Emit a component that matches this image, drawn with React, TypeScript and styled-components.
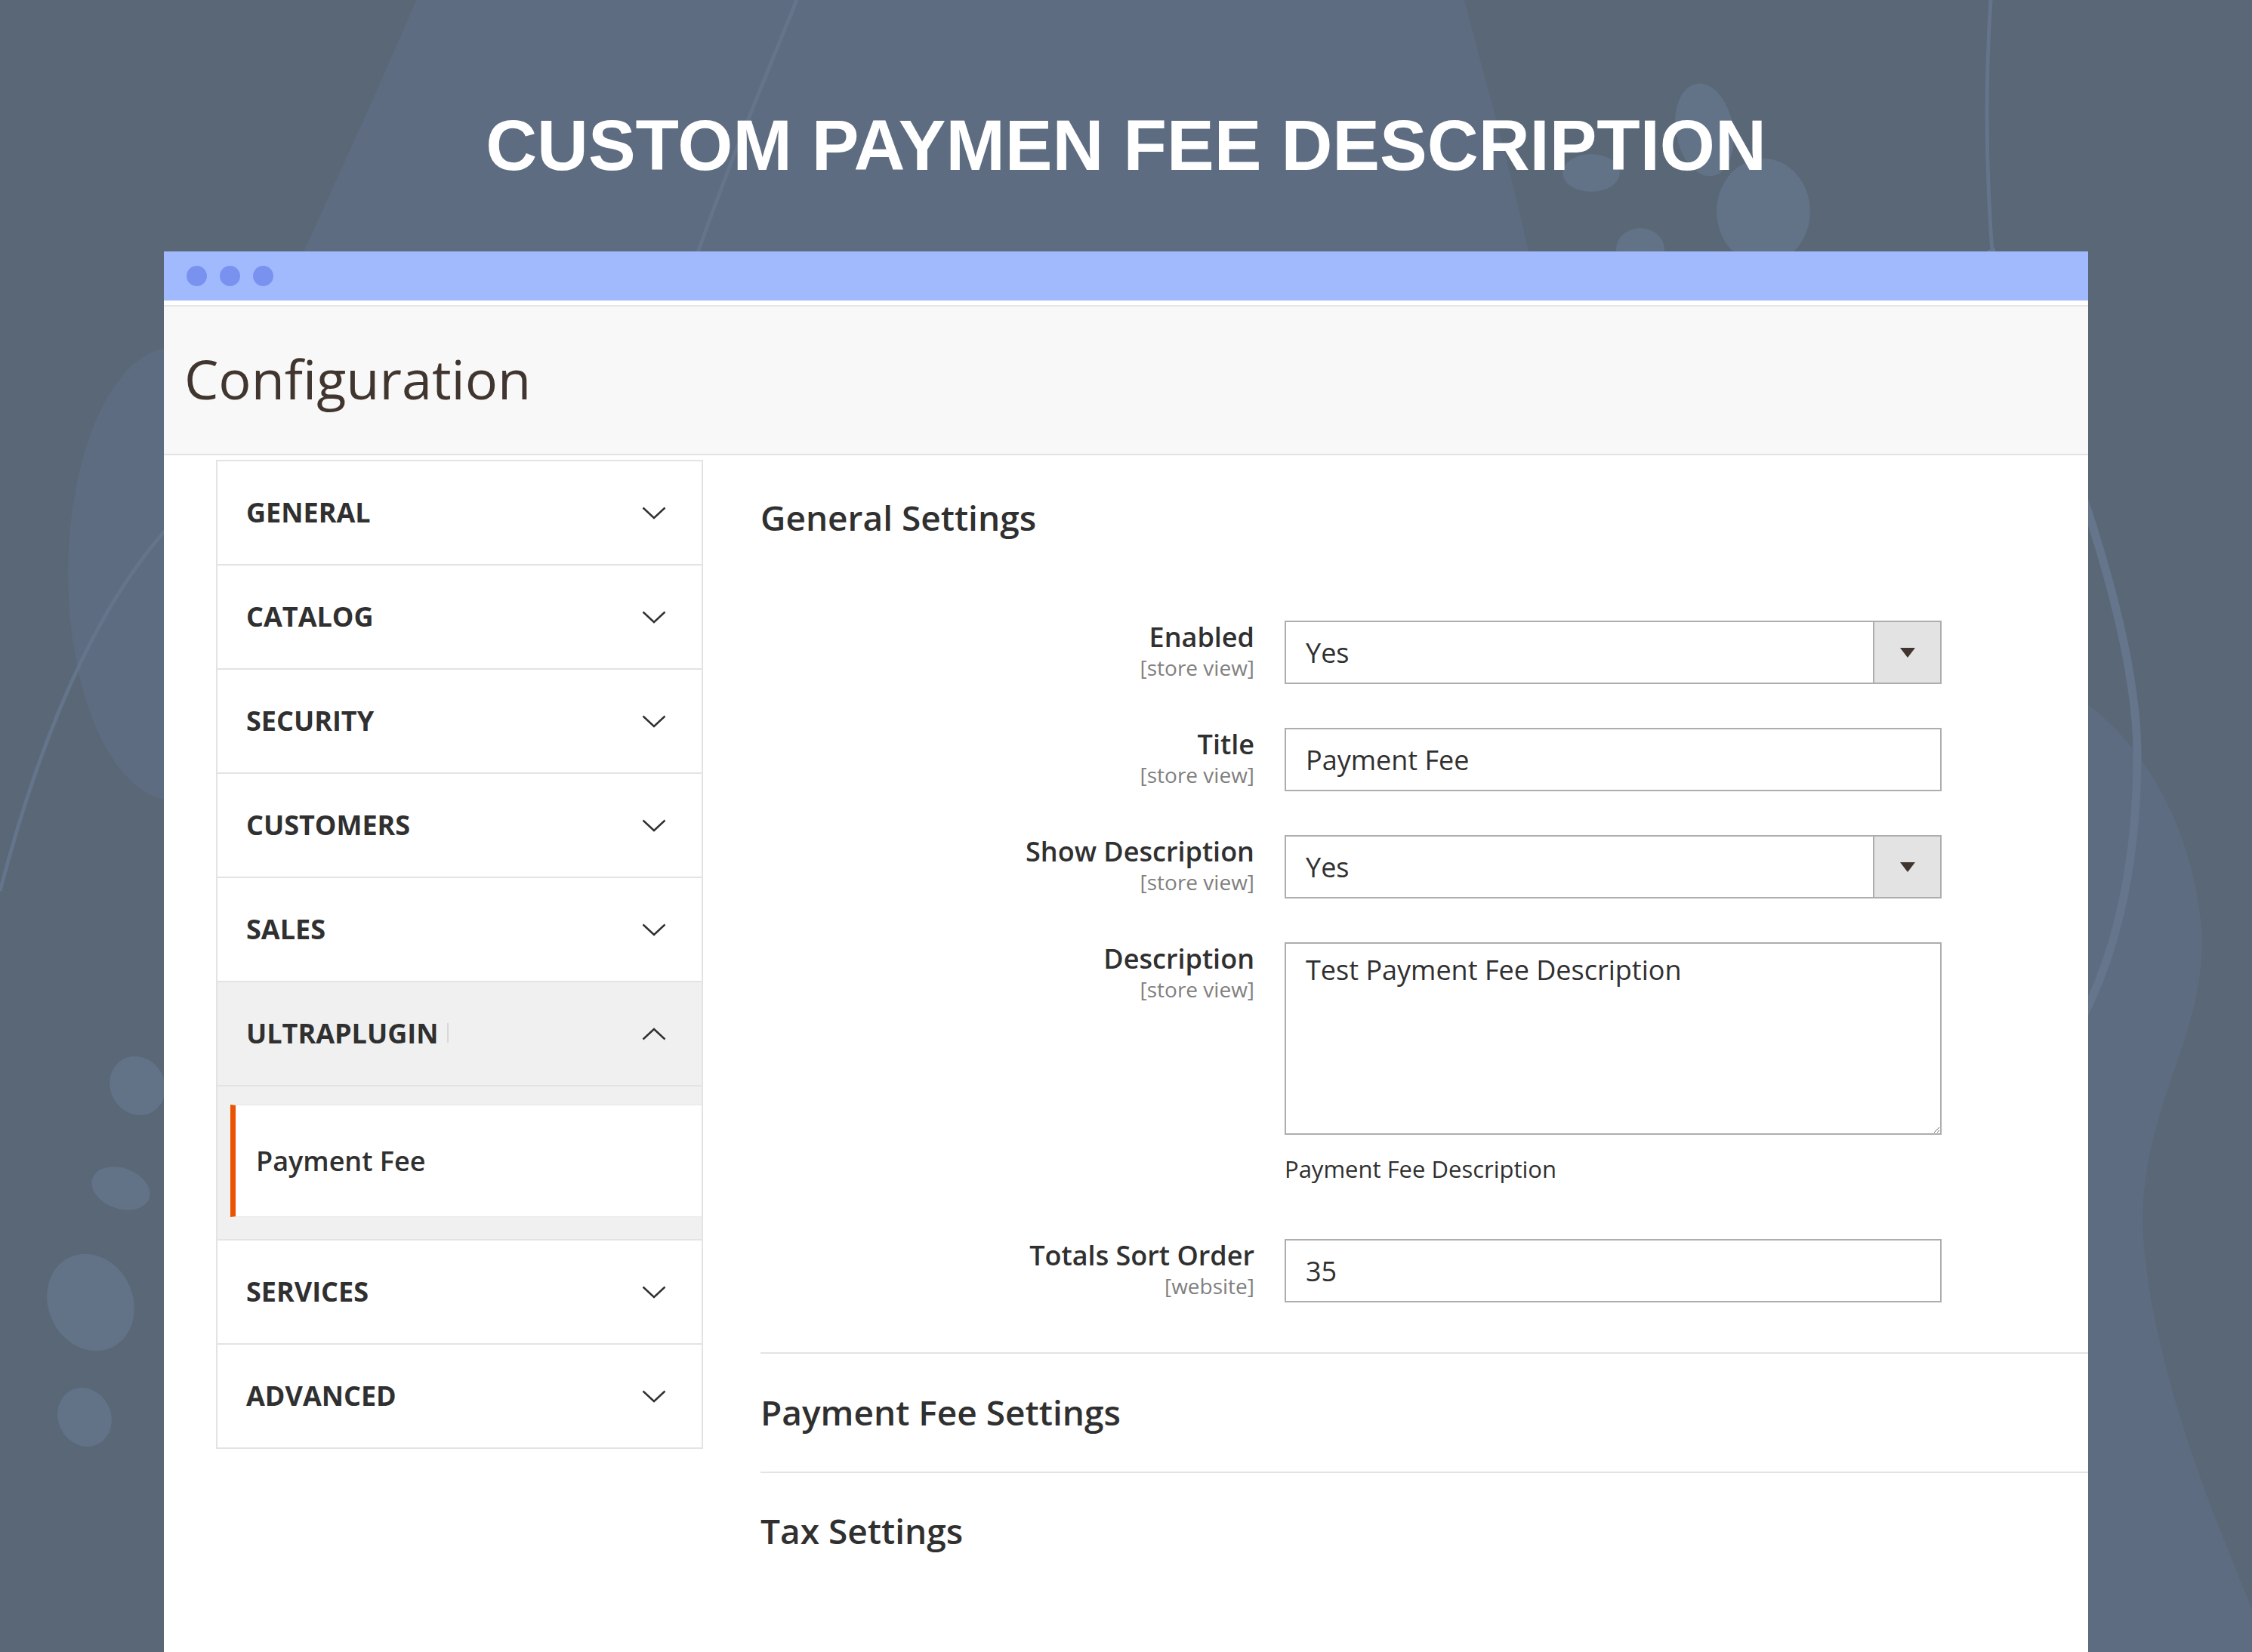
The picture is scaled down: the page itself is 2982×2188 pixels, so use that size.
import styled, { createGlobalStyle } from "styled-components";

const GlobalStyle = createGlobalStyle`
  html, body {
    margin: 0;
    padding: 0;
  }
  body {
    background: #596777;
    font-family: "Open Sans", "Liberation Sans", sans-serif;
    overflow: hidden;
  }
`;

type NavEntry = { label: string; open?: boolean; children?: string[] };

const nav: NavEntry[] = [
  { label: "GENERAL" },
  { label: "CATALOG" },
  { label: "SECURITY" },
  { label: "CUSTOMERS" },
  { label: "SALES" },
  { label: "ULTRAPLUGIN", open: true, children: ["Payment Fee"] },
  { label: "SERVICES" },
  { label: "ADVANCED" },
];

const Chevron = ({ up }: { up?: boolean }) => (
  <svg width="32" height="17" viewBox="0 0 32 17">
    <polyline
      points={up ? "1.5,15.5 16,2 30.5,15.5" : "1.5,1.5 16,15 30.5,1.5"}
      fill="none"
      stroke="#303030"
      strokeWidth="2.4"
    />
  </svg>
);

const DropArrow = () => (
  <svg width="20" height="13" viewBox="0 0 20 13">
    <polygon points="0,0 20,0 10,13" fill="#41362f" />
  </svg>
);

const Backdrop = () => (
  <BackdropSvg width="2982" height="2188" viewBox="0 0 2982 2188">
    <path d="M551,0 C500,120 440,250 390,360 L2030,360 C2000,220 1965,100 1939,0 Z" fill="#5d6c80" />
    <path d="M1055,0 C1010,110 960,230 915,360" stroke="#64748a" strokeWidth="5" fill="none" />
    <path d="M2636,0 C2628,120 2630,240 2640,360" stroke="#64748a" strokeWidth="5" fill="none" />
    <ellipse cx="2257" cy="172" rx="38" ry="62" transform="rotate(-10 2257 172)" fill="#627287" />
    <ellipse cx="2107" cy="229" rx="38" ry="25" fill="#627287" />
    <ellipse cx="2335" cy="280" rx="62" ry="70" fill="#627287" />
    <ellipse cx="2172" cy="330" rx="32" ry="28" fill="#627287" />
    <ellipse cx="230" cy="760" rx="140" ry="300" fill="#5d6c80" />
    <path d="M0,1180 C60,950 140,780 240,680" stroke="#64748a" strokeWidth="5" fill="none" />
    <path
      d="M2700,900 C2800,930 2900,1060 2915,1228 C2925,1380 2820,1480 2840,1661 C2860,1850 2950,2050 2982,2131 L2982,2188 L2700,2188 Z"
      fill="#5d6c80"
    />
    <path d="M2636,330 C2700,500 2830,800 2830,1000 C2830,1150 2800,1280 2740,1380" stroke="#65758b" strokeWidth="11" fill="none" />
    <ellipse cx="182" cy="1438" rx="36" ry="40" transform="rotate(-30 182 1438)" fill="#627287" />
    <ellipse cx="160" cy="1574" rx="40" ry="27" transform="rotate(20 160 1574)" fill="#627287" />
    <ellipse cx="120" cy="1725" rx="56" ry="66" transform="rotate(-25 120 1725)" fill="#627287" />
    <ellipse cx="112" cy="1877" rx="35" ry="40" transform="rotate(-25 112 1877)" fill="#627287" />
  </BackdropSvg>
);

const App = () => {
  return (
    <Page>
      <GlobalStyle />
      <Backdrop />
      <Headline>CUSTOM PAYMEN FEE DESCRIPTION</Headline>
      <Window>
        <TitleBar>
          <Dot />
          <Dot />
          <Dot />
        </TitleBar>
        <PageHeader>
          <PageTitle>Configuration</PageTitle>
        </PageHeader>
        <Body>
          <Sidebar>
            {nav.map((item) => (
              <div key={item.label}>
                <NavItem active={item.open}>
                  <NavLabel>
                    {item.label}
                    {item.open && <Caret />}
                  </NavLabel>
                  <Chevron up={item.open} />
                </NavItem>
                {item.children && (
                  <SubList>
                    {item.children.map((c) => (
                      <SubItem key={c}>{c}</SubItem>
                    ))}
                  </SubList>
                )}
              </div>
            ))}
          </Sidebar>
          <Main>
            <SectionTitle>General Settings</SectionTitle>
            <Form>
              <Row>
                <LabelBox>
                  <LabelText>Enabled</LabelText>
                  <Scope>[store view]</Scope>
                </LabelBox>
                <SelectField>
                  <FieldValue>Yes</FieldValue>
                  <SelectButton>
                    <DropArrow />
                  </SelectButton>
                </SelectField>
              </Row>
              <Row>
                <LabelBox>
                  <LabelText>Title</LabelText>
                  <Scope>[store view]</Scope>
                </LabelBox>
                <Field>Payment Fee</Field>
              </Row>
              <Row>
                <LabelBox>
                  <LabelText>Show Description</LabelText>
                  <Scope>[store view]</Scope>
                </LabelBox>
                <SelectField>
                  <FieldValue>Yes</FieldValue>
                  <SelectButton>
                    <DropArrow />
                  </SelectButton>
                </SelectField>
              </Row>
              <Row>
                <LabelBox>
                  <LabelText>Description</LabelText>
                  <Scope>[store view]</Scope>
                </LabelBox>
                <div>
                  <TextArea defaultValue="Test Payment Fee Description" readOnly />
                  <Hint>Payment Fee Description</Hint>
                </div>
              </Row>
              <Row>
                <LabelBox>
                  <LabelText>Totals Sort Order</LabelText>
                  <Scope>[website]</Scope>
                </LabelBox>
                <Field>35</Field>
              </Row>
            </Form>
            <Group first>
              <SectionTitle>Payment Fee Settings</SectionTitle>
            </Group>
            <Group>
              <SectionTitle>Tax Settings</SectionTitle>
            </Group>
          </Main>
        </Body>
      </Window>
    </Page>
  );
};

const Page = styled.div`
  position: relative;
  width: 2982px;
  height: 2188px;
  overflow: hidden;
  display: flex;
  flex-direction: column;
`;

const BackdropSvg = styled.svg`
  position: absolute;
  top: 0;
  left: 0;
  z-index: 0;
`;

const Headline = styled.h1`
  position: relative;
  z-index: 1;
  margin: 0;
  height: 333px;
  box-sizing: border-box;
  padding-top: 146px;
  font-family: "Liberation Sans", Arial, sans-serif;
  font-weight: 700;
  font-size: 94px;
  line-height: 93px;
  color: #ffffff;
  text-align: center;
`;

const Window = styled.div`
  position: relative;
  z-index: 1;
  margin-left: 217px;
  width: 2548px;
  flex: 1;
  background: #ffffff;
  display: flex;
  flex-direction: column;
`;

const TitleBar = styled.div`
  height: 65px;
  background: #a1bafd;
  display: flex;
  align-items: center;
  gap: 17px;
  padding-left: 30px;
  border-bottom: 6px solid #ffffff;
`;

const Dot = styled.span`
  width: 27px;
  height: 27px;
  border-radius: 50%;
  background: #7a92ef;
`;

const PageHeader = styled.div`
  height: 195px;
  background: #f8f8f8;
  border-top: 2px solid #e6e6e6;
  border-bottom: 2px solid #e3e3e3;
  display: flex;
  align-items: center;
  padding-left: 27px;
`;

const PageTitle = styled.h2`
  margin: 0 0 4px;
  font-size: 72px;
  font-weight: 400;
  color: #41362f;
  line-height: 1.2;
`;

const Body = styled.div`
  flex: 1;
  display: flex;
  align-items: flex-start;
`;

const Sidebar = styled.nav`
  margin: 6px 0 0 69px;
  width: 645px;
  box-sizing: border-box;
  border: 2px solid #e3e3e3;
  border-bottom: none;
`;

const NavItem = styled.div<{ active?: boolean }>`
  height: 138px;
  box-sizing: border-box;
  border-bottom: 2px solid #e3e3e3;
  display: flex;
  align-items: center;
  justify-content: space-between;
  padding: 0 47px 0 38px;
  background: ${(p) => (p.active ? "#f0f0f0" : "#ffffff")};
`;

const NavLabel = styled.span`
  display: flex;
  align-items: center;
  font-size: 36px;
  font-weight: 700;
  color: #303030;
  margin-top: -2px;
`;

const Caret = styled.span`
  width: 2px;
  height: 26px;
  margin-left: 12px;
  background: #d8d8d8;
`;

const SubList = styled.div`
  background: #f0f0f0;
  padding: 24px 0 29px 17px;
  border-bottom: 2px solid #e3e3e3;
`;

const SubItem = styled.div`
  height: 149px;
  box-sizing: border-box;
  background: #ffffff;
  border-left: 7px solid #eb5202;
  border-top: 1px solid #e6e6e6;
  border-bottom: 1px solid #e6e6e6;
  display: flex;
  align-items: center;
  padding-left: 27px;
  font-size: 36px;
  font-weight: 600;
  color: #303030;
`;

const Main = styled.main`
  flex: 1;
  margin-left: 76px;
  padding-top: 52px;
  display: flex;
  flex-direction: column;
`;

const SectionTitle = styled.h3`
  margin: 0;
  font-size: 46px;
  font-weight: 600;
  line-height: 60px;
  color: #303030;
`;

const Form = styled.div`
  margin-top: 107px;
  display: flex;
  flex-direction: column;
  gap: 58px;
`;

const Row = styled.div`
  display: grid;
  grid-template-columns: 654px 870px;
  column-gap: 40px;
  align-items: start;
`;

const LabelBox = styled.div`
  display: flex;
  flex-direction: column;
  align-items: flex-end;
  text-align: right;
  margin-top: -2px;
`;

const LabelText = styled.span`
  font-size: 36px;
  font-weight: 600;
  line-height: 47px;
  color: #303030;
`;

const Scope = styled.span`
  font-size: 28px;
  line-height: 34px;
  color: #808080;
`;

const Field = styled.div`
  height: 84px;
  box-sizing: border-box;
  border: 2px solid #adadad;
  background: #ffffff;
  display: flex;
  align-items: center;
  padding-left: 26px;
  font-size: 36px;
  color: #303030;
`;

const SelectField = styled(Field)`
  align-items: stretch;
`;

const FieldValue = styled.span`
  flex: 1;
  display: flex;
  align-items: center;
`;

const SelectButton = styled.span`
  width: 87px;
  background: #e3e3e3;
  border-left: 2px solid #adadad;
  display: flex;
  align-items: center;
  justify-content: center;
`;

const TextArea = styled.textarea`
  display: block;
  width: 870px;
  height: 255px;
  margin: 0;
  box-sizing: border-box;
  border: 2px solid #adadad;
  border-radius: 0;
  padding: 11px 26px;
  font-family: "Open Sans", "Liberation Sans", sans-serif;
  font-size: 36px;
  line-height: 47px;
  color: #303030;
  outline: none;
  resize: vertical;
`;

const Hint = styled.div`
  margin: 25px 0 15px;
  font-size: 31px;
  line-height: 40px;
  color: #303030;
`;

const Group = styled.section<{ first?: boolean }>`
  margin-top: ${(p) => (p.first ? "66px" : "0")};
  border-top: 2px solid #e3e3e3;
  padding: ${(p) => (p.first ? "47px 0 49px" : "46px 0")};
`;

export default App;
